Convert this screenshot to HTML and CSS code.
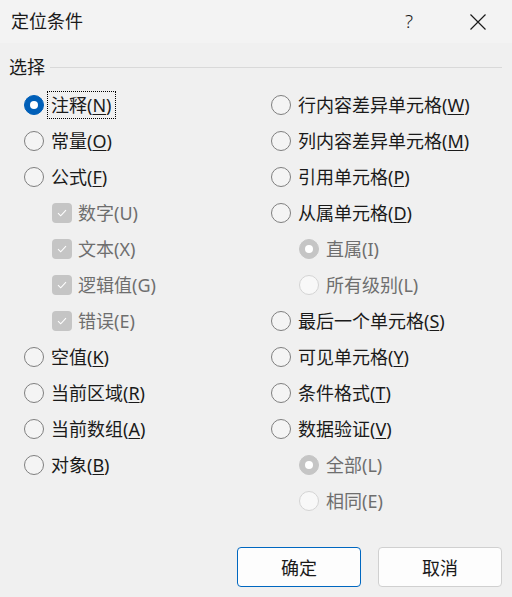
FILE: index.html
```html
<!DOCTYPE html>
<html lang="zh-CN">
<head>
<meta charset="utf-8">
<title>定位条件</title>
<link rel="stylesheet" href="styles.css">
</head>
<body>
<div class="dialog">
  <header class="titlebar">
    <div class="title">定位条件</div>
    <div class="help">?</div>
    <div class="close">
      <svg width="16" height="16" viewBox="0 0 16 16"><path d="M0.5 0.5 L15.5 15.5 M15.5 0.5 L0.5 15.5" stroke="#1a1a1a" stroke-width="1.2" fill="none"/></svg>
    </div>
  </header>
  <main class="body">
    <div class="legend"><span class="legend-text">选择</span><span class="legend-line"></span></div>
    <div class="options">
      <div class="col">
        <label class="row"><span class="radio checked"></span><span class="label focus">注释(<u>N</u>)</span></label>
        <label class="row"><span class="radio"></span><span class="label">常量(<u>O</u>)</span></label>
        <label class="row"><span class="radio"></span><span class="label">公式(<u>F</u>)</span></label>
        <label class="row sub"><span class="check"><svg width="10" height="8" viewBox="0 0 10 8"><path d="M1 4.2 L3.7 6.8 L9 1.2" stroke="#fff" stroke-width="1.1" fill="none"/></svg></span><span class="label dis">数字(U)</span></label>
        <label class="row sub"><span class="check"><svg width="10" height="8" viewBox="0 0 10 8"><path d="M1 4.2 L3.7 6.8 L9 1.2" stroke="#fff" stroke-width="1.1" fill="none"/></svg></span><span class="label dis">文本(X)</span></label>
        <label class="row sub"><span class="check"><svg width="10" height="8" viewBox="0 0 10 8"><path d="M1 4.2 L3.7 6.8 L9 1.2" stroke="#fff" stroke-width="1.1" fill="none"/></svg></span><span class="label dis">逻辑值(G)</span></label>
        <label class="row sub"><span class="check"><svg width="10" height="8" viewBox="0 0 10 8"><path d="M1 4.2 L3.7 6.8 L9 1.2" stroke="#fff" stroke-width="1.1" fill="none"/></svg></span><span class="label dis">错误(E)</span></label>
        <label class="row"><span class="radio"></span><span class="label">空值(<u>K</u>)</span></label>
        <label class="row"><span class="radio"></span><span class="label">当前区域(<u>R</u>)</span></label>
        <label class="row"><span class="radio"></span><span class="label">当前数组(<u>A</u>)</span></label>
        <label class="row"><span class="radio"></span><span class="label">对象(<u>B</u>)</span></label>
      </div>
      <div class="col">
        <label class="row"><span class="radio"></span><span class="label">行内容差异单元格(<u>W</u>)</span></label>
        <label class="row"><span class="radio"></span><span class="label">列内容差异单元格(<u>M</u>)</span></label>
        <label class="row"><span class="radio"></span><span class="label">引用单元格(<u>P</u>)</span></label>
        <label class="row"><span class="radio"></span><span class="label">从属单元格(<u>D</u>)</span></label>
        <label class="row sub2"><span class="radio dis-checked"></span><span class="label dis">直属(I)</span></label>
        <label class="row sub2"><span class="radio dis-empty"></span><span class="label dis">所有级别(L)</span></label>
        <label class="row"><span class="radio"></span><span class="label">最后一个单元格(<u>S</u>)</span></label>
        <label class="row"><span class="radio"></span><span class="label">可见单元格(<u>Y</u>)</span></label>
        <label class="row"><span class="radio"></span><span class="label">条件格式(<u>T</u>)</span></label>
        <label class="row"><span class="radio"></span><span class="label">数据验证(<u>V</u>)</span></label>
        <label class="row sub2"><span class="radio dis-checked"></span><span class="label dis">全部(L)</span></label>
        <label class="row sub2"><span class="radio dis-empty"></span><span class="label dis">相同(E)</span></label>
      </div>
    </div>
    <div class="buttons">
      <button class="btn primary">确定</button>
      <button class="btn">取消</button>
    </div>
  </main>
</div>
</body>
</html>
```

FILE: styles.css
```css
* { box-sizing: border-box; }
html, body {
  margin: 0;
  padding: 0;
  background: #f0f0f0;
}
body {
  font-family: "Noto Sans", "Noto Sans CJK SC", sans-serif;
  color: #1a1a1a;
}
.dialog {
  width: 512px;
  height: 597px;
  background: #f0f0f0;
  display: flex;
  flex-direction: column;
}
.titlebar {
  height: 43px;
  background: #f3f3f3;
  display: flex;
  align-items: center;
  padding-left: 11px;
}
.title {
  font-size: 18px;
  line-height: 24px;
  flex: 1;
  margin-top: -2px;
}
.help {
  font-size: 19px;
  line-height: 24px;
  color: #1a1a1a;
  width: 20px;
  margin-right: 45px;
  font-weight: 300;
  margin-top: -2px;
}
.close {
  width: 16px;
  height: 16px;
  margin-right: 26px;
  margin-top: 1px;
  display: flex;
}
.body {
  flex: 1;
  display: flex;
  flex-direction: column;
  padding: 12px 10px 0 9px;
}
.legend {
  display: flex;
  align-items: center;
  height: 24px;
}
.legend-text {
  font-size: 18px;
  line-height: 24px;
  margin-right: 5px;
}
.legend-line {
  flex: 1;
  height: 1px;
  background: #d9d9d9;
}
.options {
  display: grid;
  grid-template-columns: 247px 1fr;
  padding-left: 15px;
  margin-top: 8px;
}
.row {
  height: 36px;
  display: flex;
  align-items: center;
  font-size: 18px;
}
.row.sub { padding-left: 28px; }
.row.sub2 { padding-left: 28px; }
.radio {
  width: 20px;
  height: 20px;
  border-radius: 50%;
  border: 1px solid #7f7f7f;
  background: #f4f4f4;
  margin-right: 7px;
  flex: none;
  display: flex;
  align-items: center;
  justify-content: center;
}
.radio.checked {
  background: #005fb8;
  border-color: #005fb8;
}
.radio.checked::after {
  content: "";
  width: 8px;
  height: 8px;
  border-radius: 50%;
  background: #fff;
}
.radio.dis-checked {
  background: #c5c5c5;
  border-color: #c5c5c5;
}
.radio.dis-checked::after {
  content: "";
  width: 8px;
  height: 8px;
  border-radius: 50%;
  background: #fff;
}
.radio.dis-empty {
  background: #f8f8f8;
  border-color: #d4d4d4;
}
.check {
  width: 20px;
  height: 20px;
  border-radius: 4px;
  background: #c5c5c5;
  margin-right: 6px;
  flex: none;
  display: flex;
  align-items: center;
  justify-content: center;
}
.label {
  line-height: 22px;
  white-space: nowrap;
}
.label u {
  text-decoration-thickness: 1px;
  text-underline-offset: 2px;
}
.label.dis { color: #6e6e6e; }
.label.focus {
  outline: 1px dotted #000;
  outline-offset: 0;
  padding: 2px 3px;
  margin-left: -3px;
}
.buttons {
  display: flex;
  justify-content: flex-end;
  gap: 17px;
  margin-top: 28px;
}
.btn {
  width: 124px;
  height: 40px;
  background: #fdfdfd;
  border: 1px solid #d0d0d0;
  border-radius: 4px;
  font-family: "Noto Sans", "Noto Sans CJK SC", sans-serif;
  font-size: 18px;
  color: #1a1a1a;
  padding: 0;
}
.btn.primary {
  border-color: #0067c0;
}
```
